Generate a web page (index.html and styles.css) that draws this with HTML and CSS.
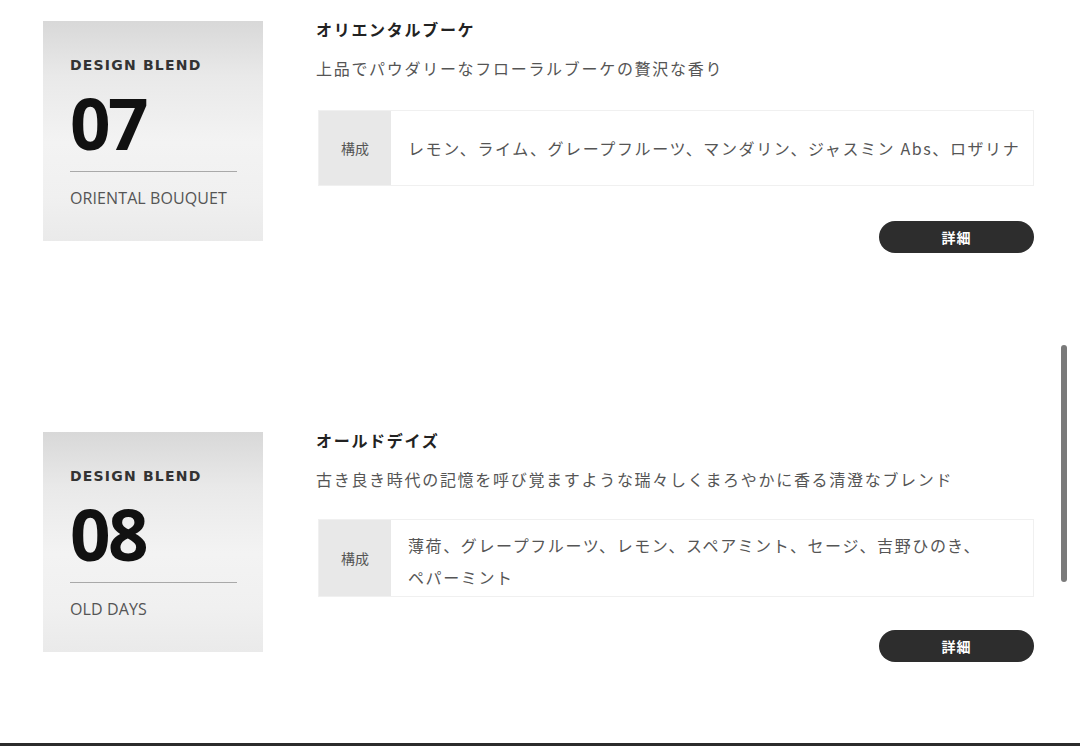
FILE: index.html
```html
<!DOCTYPE html>
<html lang="ja">
<head>
<meta charset="utf-8">
<title>Design Blend</title>
<link rel="stylesheet" href="styles.css">
</head>
<body>
<div class="page">
  <div class="list">
    <section class="item">
      <div class="card">
        <div class="card-label">DESIGN BLEND</div>
        <div class="card-num">07</div>
        <div class="card-rule"></div>
        <div class="card-name">ORIENTAL BOUQUET</div>
      </div>
      <div class="info">
        <h2 class="title">オリエンタルブーケ</h2>
        <p class="desc">上品でパウダリーなフローラルブーケの贅沢な香り</p>
        <div class="spec">
          <div class="spec-label">構成</div>
          <div class="spec-body">レモン、ライム、グレープフルーツ、マンダリン、ジャスミン Abs、ロザリナ</div>
        </div>
        <div class="actions"><a class="btn">詳細</a></div>
      </div>
    </section>
    <section class="item">
      <div class="card">
        <div class="card-label">DESIGN BLEND</div>
        <div class="card-num">08</div>
        <div class="card-rule"></div>
        <div class="card-name">OLD DAYS</div>
      </div>
      <div class="info">
        <h2 class="title">オールドデイズ</h2>
        <p class="desc">古き良き時代の記憶を呼び覚ますような瑞々しくまろやかに香る清澄なブレンド</p>
        <div class="spec spec-multi">
          <div class="spec-label">構成</div>
          <div class="spec-body">薄荷、グレープフルーツ、レモン、スペアミント、セージ、吉野ひのき、<span class="nw">ペパーミント</span></div>
        </div>
        <div class="actions"><a class="btn">詳細</a></div>
      </div>
    </section>
  </div>
  <div class="scrollbar"></div>
</div>
</body>
</html>
```

FILE: styles.css
```css
html, body {
  margin: 0;
  padding: 0;
  background: #ffffff;
}
body {
  font-family: "Noto Sans CJK JP", "Open Sans", sans-serif;
  color: #333;
}
.page {
  position: relative;
  height: 746px;
  box-sizing: border-box;
  border-bottom: 3px solid #2b2b2b;
  overflow: hidden;
}
.list {
  display: flex;
  flex-direction: column;
  gap: 175px;
  padding: 17px 0 0 43px;
}
.item {
  display: flex;
  align-items: flex-start;
  gap: 53px;
}
.card {
  flex: 0 0 auto;
  width: 220px;
  height: 220px;
  margin-top: 4px;
  box-sizing: border-box;
  padding: 0 26px 0 27px;
  display: flex;
  flex-direction: column;
  background: linear-gradient(to bottom, #d8d8d8 0%, #e9e9e9 25%, #f3f3f3 55%, #f0f0f0 80%, #eaeaea 100%);
}
.card-label {
  margin-top: 34px;
  font-family: "DejaVu Sans", sans-serif;
  font-weight: bold;
  font-size: 14px;
  line-height: 20px;
  letter-spacing: 1.2px;
  color: #333;
}
.card-num {
  margin-top: 12px;
  font-family: "Open Sans", sans-serif;
  font-weight: 700;
  font-size: 71px;
  line-height: 72px;
  letter-spacing: -2.5px;
  color: #111;
}
.card-rule {
  margin-top: 12px;
  height: 1px;
  background: #a9a9a9;
}
.card-name {
  margin-top: 16px;
  font-family: "Open Sans", sans-serif;
  font-size: 16px;
  line-height: 20px;
  letter-spacing: 0.1px;
  color: #555;
}
.info {
  flex: 0 0 718px;
  display: flex;
  flex-direction: column;
}
.title {
  margin: 0;
  font-size: 16px;
  font-weight: 700;
  line-height: 24px;
  letter-spacing: 1.7px;
  color: #222;
}
.desc {
  margin: 15px 0 0;
  font-size: 16px;
  line-height: 24px;
  letter-spacing: 1.7px;
  color: #555;
}
.spec {
  margin: 30px 0 0 2px;
  display: flex;
  border: 1px solid #f0f0f0;
  box-sizing: border-box;
}
.spec-label {
  flex: 0 0 72px;
  display: flex;
  align-items: center;
  justify-content: center;
  background: #e8e8e8;
  font-size: 14px;
  color: #555;
}
.spec-body {
  flex: 1;
  padding: 21px 4px 21px 17px;
  font-size: 16px;
  line-height: 32px;
  letter-spacing: 1.6px;
  color: #555;
}
.spec-multi {
  margin-top: 28px;
}
.spec-multi .spec-body {
  padding-top: 9px;
  padding-bottom: 3px;
}
.nw {
  white-space: nowrap;
}
.actions {
  display: flex;
  justify-content: flex-end;
  margin-top: 35px;
}
.spec-multi + .actions {
  margin-top: 33px;
}
.btn {
  display: block;
  width: 155px;
  height: 32px;
  border-radius: 16px;
  background: #2d2d2d;
  color: #fff;
  font-size: 14px;
  font-weight: 700;
  line-height: 32px;
  text-align: center;
  letter-spacing: 1px;
}
.scrollbar {
  position: absolute;
  left: 1061px;
  top: 345px;
  width: 6px;
  height: 237px;
  border-radius: 3px;
  background: #7a7a7a;
}
```
